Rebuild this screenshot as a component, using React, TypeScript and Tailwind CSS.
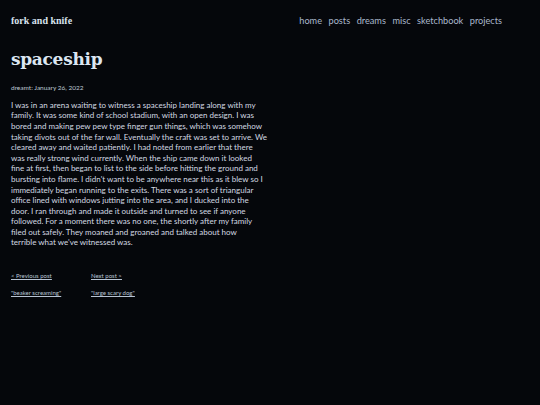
import React from "react";

const navLinks = ["home", "posts", "dreams", "misc", "sketchbook", "projects"];

// post body, broken the way the column wraps it
const lines = [
  "I was in an arena waiting to witness a spaceship landing along with my",
  "family. It was some kind of school stadium, with an open design. I was",
  "bored and making pew pew type finger gun things, which was somehow",
  "taking divots out of the far wall. Eventually the craft was set to arrive. We",
  "cleared away and waited patiently. I had noted from earlier that there",
  "was really strong wind currently. When the ship came down it looked",
  "fine at first, then began to list to the side before hitting the ground and",
  "bursting into flame. I didn't want to be anywhere near this as it blew so I",
  "immediately began running to the exits. There was a sort of triangular",
  "office lined with windows jutting into the area, and I ducked into the",
  "door. I ran through and made it outside and turned to see if anyone",
  "followed. For a moment there was no one, the shortly after my family",
  "filed out safely. They moaned and groaned and talked about how",
  "terrible what we've witnessed was.",
];

export default function App() {
  return (
    <div className="min-h-[405px] w-[540px] bg-[#05070b] text-[#d3d9e2] font-['Lato',sans-serif]">
      <header className="flex items-center justify-between pl-[11px] pr-[38px] pt-[13px]">
        <a className="font-['Liberation_Serif',serif] font-bold text-[10px] leading-[15px] text-[#d8e2ee]">
          fork and knife
        </a>
        <nav className="flex gap-[6.5px] text-[9.2px] leading-[15px] text-[#a9b7cb]">
          {navLinks.map((l) => (
            <a key={l}>{l}</a>
          ))}
        </nav>
      </header>

      <main className="px-[11px]">
        <h1 className="mt-[19px] font-['DejaVu_Serif',serif] font-bold text-[17px] leading-[24px] tracking-[-0.3px] text-[#dce6f2]">
          spaceship
        </h1>
        <p className="mt-[12px] text-[6.5px] leading-[9.75px] text-[#bfc8d4]">dreamt: January 26, 2022</p>
        <div className="mt-[7px] text-[8px] leading-[10.6px] whitespace-nowrap">
          {lines.map((l, i) => (
            <div key={i}>{l}</div>
          ))}
        </div>

        <div className="mt-[23.4px] grid w-[160px] grid-cols-2 gap-y-[8px] text-[6px] leading-[9px] text-[#b7c3d3] underline">
          <a>&lt; Previous post</a>
          <a>Next post &gt;</a>
          <a>"beaker screaming"</a>
          <a>"large scary dog"</a>
        </div>
      </main>
    </div>
  );
}
